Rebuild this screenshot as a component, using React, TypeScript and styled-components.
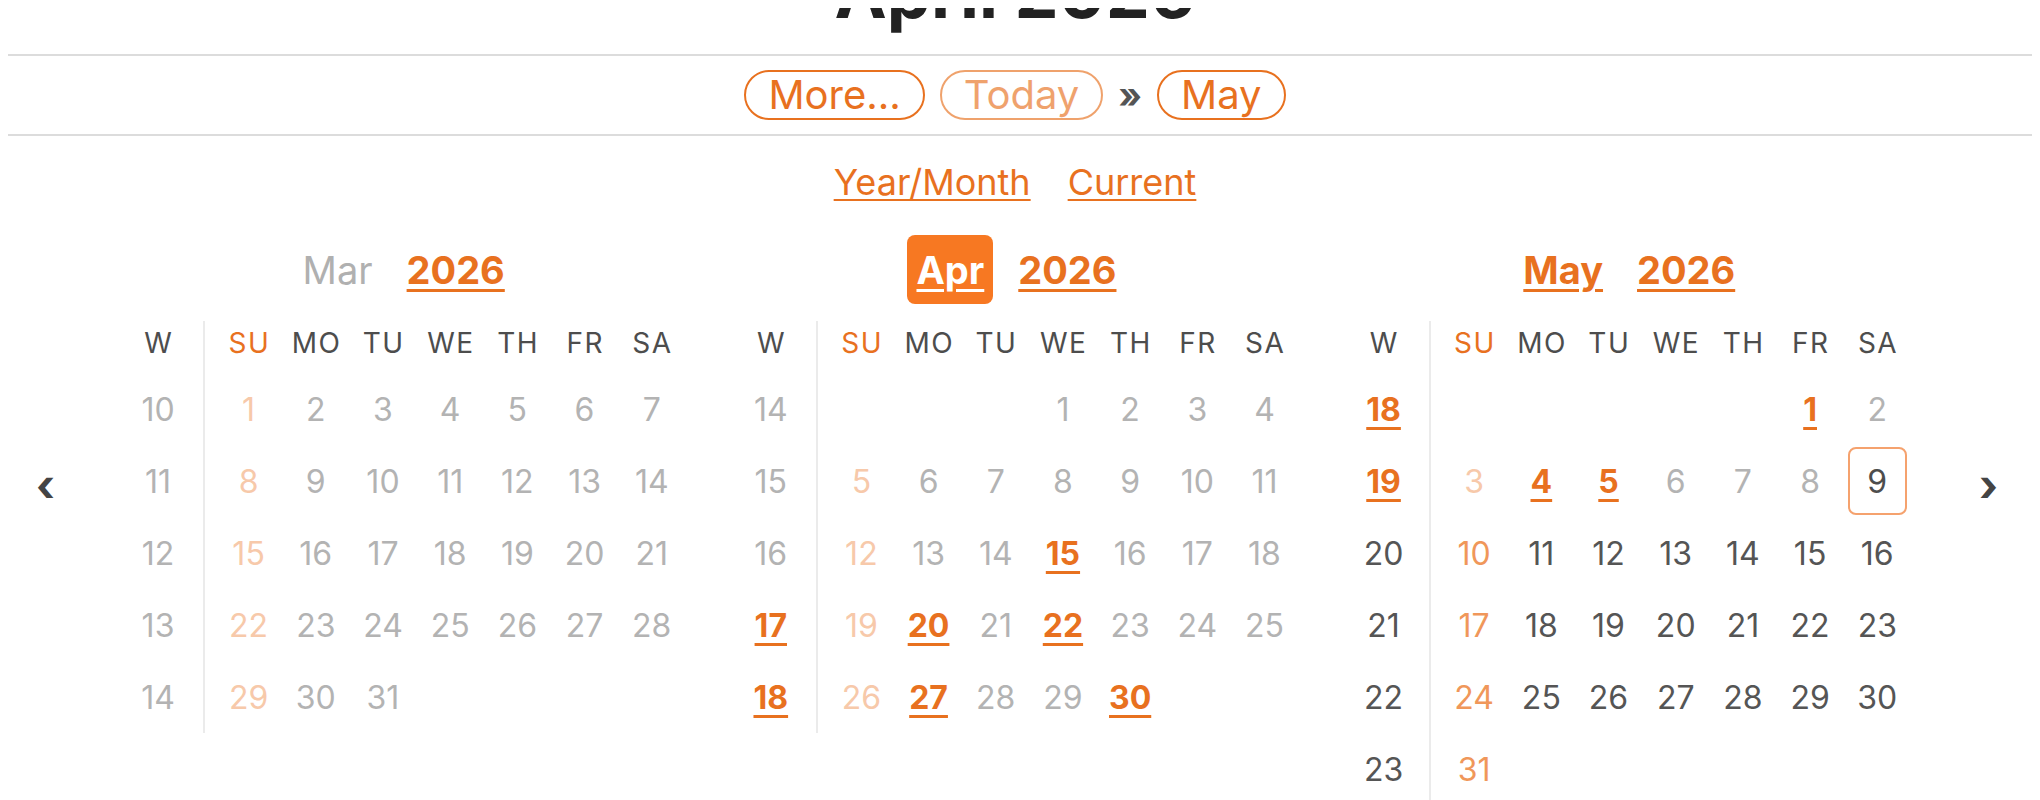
import React from "react";
import styled, { createGlobalStyle, css } from "styled-components";

const ORANGE = "#e8711f";
const FONT = `Inter, "Liberation Sans", "Noto Sans", sans-serif`;

const GlobalStyle = createGlobalStyle`
  html, body { background: #ffffff; }
  body {
    margin: 8px;
    font-family: ${FONT};
    overflow: hidden;
  }
  * { box-sizing: border-box; }
`;

const Page = styled.div`
  display: flow-root;
`;

const Centered = styled.div`
  padding-right: 10px;
`;

const Title = styled.h1`
  margin: -50.5px 0 26.5px;
  padding-right: 10px;
  font-size: 70px;
  line-height: 70px;
  font-weight: 700;
  color: #222222;
  text-align: center;
`;

const Toolbar = styled.nav`
  display: flex;
  justify-content: center;
  align-items: center;
  gap: 15px;
  padding: 14px 10px 14px 0;
  border-top: 2px solid #dcdcdc;
  border-bottom: 2px solid #dcdcdc;
`;

const PillButton = styled.button<{ $dim?: boolean }>`
  height: 50px;
  padding: 0 22px;
  border: 2px solid ${ORANGE};
  border-radius: 25px;
  background: #ffffff;
  color: ${ORANGE};
  font-family: ${FONT};
  font-size: 40px;
  line-height: 46px;
  font-weight: 400;
  cursor: pointer;
  opacity: ${(p) => (p.$dim ? 0.65 : 1)};
`;

const Chevrons = styled.span`
  color: #555555;
  font-size: 36px;
  font-weight: 700;
  line-height: 46px;
`;

const LinkRow = styled.div`
  display: flex;
  justify-content: center;
  gap: 37px;
  margin-top: 24px;
  line-height: 44px;
`;

const TextLink = styled.a`
  color: ${ORANGE};
  font-size: 36px;
  text-decoration: underline;
  text-decoration-thickness: 2px;
  text-underline-offset: 4px;
  cursor: pointer;
`;

const CalendarRow = styled.div`
  display: flex;
  align-items: flex-start;
  margin-top: 31px;
`;

const Nav = styled.div<{ $side: "left" | "right" }>`
  ${(p) =>
    p.$side === "left"
      ? css`
          width: 105px;
          padding-left: 28px;
        `
      : css`
          flex: 1;
          padding-left: 68px;
        `}
  padding-top: 228px;
  font-size: 44px;
  line-height: 44px;
  font-weight: 700;
  color: #444444;
  cursor: pointer;
`;

const Months = styled.div`
  display: flex;
  gap: 40.4px;
`;

const MonthBlock = styled.section`
  width: 572.4px;
`;

const MonthHeader = styled.div`
  display: flex;
  justify-content: center;
  align-items: center;
  gap: 25px;
  height: 69px;
  margin-bottom: 17px;
`;

const MonthLabel = styled.span<{ $state: "muted" | "active" | "link" }>`
  display: flex;
  align-items: center;
  height: 69px;
  padding: 0 9px;
  border-radius: 8px;
  font-size: 38px;
  ${(p) =>
    p.$state === "muted" &&
    css`
      color: #b0b0b0;
      font-weight: 400;
    `}
  ${(p) =>
    p.$state === "active" &&
    css`
      background: #f77822;
      color: #ffffff;
      font-weight: 700;
      text-decoration: underline;
      text-decoration-thickness: 3px;
      text-underline-offset: 5px;
    `}
  ${(p) =>
    p.$state === "link" &&
    css`
      color: ${ORANGE};
      font-weight: 700;
      text-decoration: underline;
      text-decoration-thickness: 3px;
      text-underline-offset: 5px;
    `}
`;

const YearLabel = styled.span`
  color: ${ORANGE};
  font-size: 38px;
  font-weight: 700;
  text-decoration: underline;
  text-decoration-thickness: 3px;
  text-underline-offset: 5px;
`;

const MonthBody = styled.div`
  display: flex;
  align-items: stretch;
`;

const WeekColumn = styled.div`
  width: 90px;
  display: flex;
  flex-direction: column;
`;

const DaysGrid = styled.div`
  border-left: 2px solid #ebebeb;
  padding-left: 10px;
  display: grid;
  grid-template-columns: repeat(7, 67.2px);
  grid-auto-rows: 72px;
  grid-template-rows: 52px;
`;

const HeadCell = styled.div<{ $sunday?: boolean }>`
  height: 52px;
  padding-bottom: 8px;
  line-height: 44px;
  text-align: center;
  font-size: 28px;
  letter-spacing: 1.5px;
  text-indent: 1.5px;
  color: ${(p) => (p.$sunday ? ORANGE : "#4d4d4d")};
`;

type Tone = "past" | "pastSun" | "future" | "futureSun" | "link" | "selected";

const toneColor: Record<Tone, string> = {
  past: "#b3b3b3",
  pastSun: "#f7c9aa",
  future: "#555555",
  futureSun: "#f0975a",
  link: ORANGE,
  selected: "#4d4d4d",
};

const Cell = styled.div`
  height: 72px;
  display: flex;
  align-items: center;
  justify-content: center;
`;

const Num = styled.span<{ $tone: Tone }>`
  font-size: 32px;
  color: ${(p) => toneColor[p.$tone]};
  cursor: default;
  ${(p) =>
    p.$tone === "link" &&
    css`
      font-weight: 700;
      text-decoration: underline;
      text-decoration-thickness: 3px;
      text-underline-offset: 6px;
      cursor: pointer;
    `}
  ${(p) =>
    p.$tone === "selected" &&
    css`
      width: 59px;
      height: 68px;
      display: flex;
      align-items: center;
      justify-content: center;
      border: 2px solid #f5a26e;
      border-radius: 8px;
    `}
`;

type MonthDef = {
  label: string;
  year: number;
  month: number; // 0-based
  firstWeek: number;
  labelState: "muted" | "active" | "link";
  links: number[];
  weekLinks: number[];
  futureWeeks: number[];
  selected?: number;
  futureFrom?: number;
};

const MONTHS: MonthDef[] = [
  {
    label: "Mar",
    year: 2026,
    month: 2,
    firstWeek: 10,
    labelState: "muted",
    links: [],
    weekLinks: [],
    futureWeeks: [],
  },
  {
    label: "Apr",
    year: 2026,
    month: 3,
    firstWeek: 14,
    labelState: "active",
    links: [15, 20, 22, 27, 30],
    weekLinks: [17, 18],
    futureWeeks: [],
  },
  {
    label: "May",
    year: 2026,
    month: 4,
    firstWeek: 18,
    labelState: "link",
    links: [1, 4, 5],
    weekLinks: [18, 19],
    futureWeeks: [20, 21, 22, 23],
    selected: 9,
    futureFrom: 10,
  },
];

const HEADS = ["SU", "MO", "TU", "WE", "TH", "FR", "SA"];

function dayTone(m: MonthDef, day: number, weekday: number): Tone {
  if (m.links.includes(day)) return "link";
  if (m.selected === day) return "selected";
  const future = m.futureFrom !== undefined && day >= m.futureFrom;
  if (weekday === 0) return future ? "futureSun" : "pastSun";
  return future ? "future" : "past";
}

function weekTone(m: MonthDef, w: number): Tone {
  if (m.weekLinks.includes(w)) return "link";
  if (m.futureWeeks.includes(w)) return "future";
  return "past";
}

function Month({ m }: { m: MonthDef }) {
  const offset = new Date(m.year, m.month, 1).getDay();
  const count = new Date(m.year, m.month + 1, 0).getDate();
  const rows = Math.ceil((offset + count) / 7);
  const cells: (number | null)[] = [];
  for (let i = 0; i < offset; i++) cells.push(null);
  for (let d = 1; d <= count; d++) cells.push(d);
  const weeks = Array.from({ length: rows }, (_, i) => m.firstWeek + i);

  return (
    <MonthBlock>
      <MonthHeader>
        <MonthLabel $state={m.labelState}>{m.label}</MonthLabel>
        <YearLabel>{m.year}</YearLabel>
      </MonthHeader>
      <MonthBody>
        <WeekColumn>
          <HeadCell>W</HeadCell>
          {weeks.map((w) => (
            <Cell key={w}>
              <Num $tone={weekTone(m, w)}>{w}</Num>
            </Cell>
          ))}
        </WeekColumn>
        <DaysGrid>
          {HEADS.map((h, i) => (
            <HeadCell key={h} $sunday={i === 0}>
              {h}
            </HeadCell>
          ))}
          {cells.map((d, i) =>
            d === null ? (
              <Cell key={`e${i}`} />
            ) : (
              <Cell key={d}>
                <Num $tone={dayTone(m, d, i % 7)}>{d}</Num>
              </Cell>
            )
          )}
        </DaysGrid>
      </MonthBody>
    </MonthBlock>
  );
}

export default function App() {
  return (
    <>
      <GlobalStyle />
      <Page>
        <Title>April 2026</Title>
        <Toolbar>
          <PillButton>More...</PillButton>
          <PillButton $dim>Today</PillButton>
          <Chevrons>»</Chevrons>
          <PillButton>May</PillButton>
        </Toolbar>
        <Centered>
          <LinkRow>
            <TextLink>Year/Month</TextLink>
            <TextLink>Current</TextLink>
          </LinkRow>
        </Centered>
        <CalendarRow>
          <Nav $side="left">‹</Nav>
          <Months>
            {MONTHS.map((m) => (
              <Month key={m.label} m={m} />
            ))}
          </Months>
          <Nav $side="right">›</Nav>
        </CalendarRow>
      </Page>
    </>
  );
}
